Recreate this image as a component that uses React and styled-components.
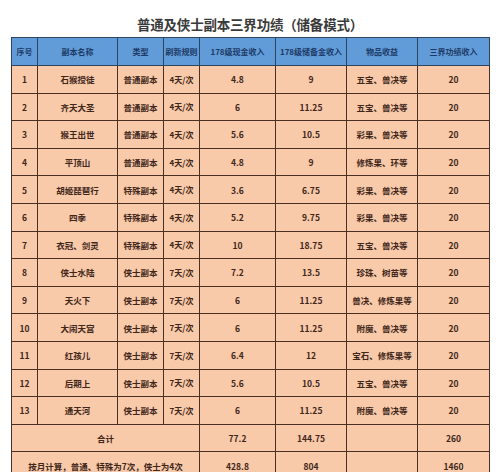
import React from 'react';
import styled, { createGlobalStyle } from 'styled-components';

const GlobalStyle = createGlobalStyle`
  html, body {
    margin: 0;
    padding: 0;
    background: #ffffff;
  }
  body {
    font-family: "Noto Sans CJK SC", "Noto Sans", sans-serif;
  }
`;

const Page = styled.div`
  width: 500px;
  height: 472px;
  overflow: hidden;
  padding: 0 11px;
  box-sizing: border-box;
`;

const Title = styled.h1`
  margin: 0;
  padding-top: 15px;
  height: 22px;
  line-height: 18px;
  font-size: 13.5px;
  font-weight: 700;
  color: #3a3a3a;
  text-align: center;
  letter-spacing: -0.2px;
`;

const Table = styled.table`
  width: 478px;
  border-collapse: collapse;
  table-layout: fixed;
  border: 1px solid #3b2a20;
`;

const HeadCell = styled.th`
  height: 27px;
  padding: 0;
  background: #619cd9;
  color: #1d3a66;
  font-size: 8px;
  font-weight: 700;
  text-align: center;
  white-space: nowrap;
  overflow: hidden;
  border: 1px solid #2c4460;
`;

const Cell = styled.td`
  height: 26.6px;
  padding: 0;
  background: #f8caa9;
  color: #3f2619;
  font-size: ${({ small }) => (small ? '8px' : '8.5px')};
  font-weight: 700;
  text-align: center;
  white-space: nowrap;
  overflow: hidden;
  border: 1px solid #4a3022;
`;

const widths = [26, 80, 46, 36, 76, 71, 71, 72];

const headers = [
  '序号',
  '副本名称',
  '类型',
  '刷新规则',
  '178级现金收入',
  '178级储备金收入',
  '物品收益',
  '三界功绩收入',
];

const rows = [
  ['1', '石猴授徒', '普通副本', '4天/次', '4.8', '9', '五宝、兽决等', '20'],
  ['2', '齐天大圣', '普通副本', '4天/次', '6', '11.25', '五宝、兽决等', '20'],
  ['3', '猴王出世', '普通副本', '4天/次', '5.6', '10.5', '彩果、兽决等', '20'],
  ['4', '平顶山', '普通副本', '4天/次', '4.8', '9', '修炼果、环等', '20'],
  ['5', '胡姬琵琶行', '特殊副本', '4天/次', '3.6', '6.75', '彩果、兽决等', '20'],
  ['6', '四季', '特殊副本', '4天/次', '5.2', '9.75', '彩果、兽决等', '20'],
  ['7', '衣冠、剑灵', '特殊副本', '4天/次', '10', '18.75', '五宝、兽决等', '20'],
  ['8', '侠士水陆', '侠士副本', '7天/次', '7.2', '13.5', '珍珠、树苗等', '20'],
  ['9', '天火下', '侠士副本', '7天/次', '6', '11.25', '兽决、修炼果等', '20'],
  ['10', '大闹天宫', '侠士副本', '7天/次', '6', '11.25', '附魔、兽决等', '20'],
  ['11', '红孩儿', '侠士副本', '7天/次', '6.4', '12', '宝石、修炼果等', '20'],
  ['12', '后期上', '侠士副本', '7天/次', '5.6', '10.5', '五宝、兽决等', '20'],
  ['13', '通天河', '侠士副本', '7天/次', '6', '11.25', '附魔、兽决等', '20'],
];

const summary = [
  ['合计', '77.2', '144.75', '', '260'],
  ['按月计算，普通、特殊为7次，侠士为4次', '428.8', '804', '', '1460'],
];

const App = () => (
  <Page>
    <GlobalStyle />
    <Title>普通及侠士副本三界功绩（储备模式）</Title>
    <Table>
      <colgroup>
        {widths.map((w, i) => (
          <col key={i} style={{ width: w }} />
        ))}
      </colgroup>
      <thead>
        <tr>
          {headers.map(h => (
            <HeadCell key={h}>{h}</HeadCell>
          ))}
        </tr>
      </thead>
      <tbody>
        {rows.map(row => (
          <tr key={row[0]}>
            {row.map((v, i) => (
              <Cell key={i} small={i === 3}>
                {v}
              </Cell>
            ))}
          </tr>
        ))}
        {summary.map(([label, ...rest]) => (
          <tr key={label}>
            <Cell colSpan={4}>{label}</Cell>
            {rest.map((v, i) => (
              <Cell key={i}>{v}</Cell>
            ))}
          </tr>
        ))}
      </tbody>
    </Table>
  </Page>
);

export default App;
